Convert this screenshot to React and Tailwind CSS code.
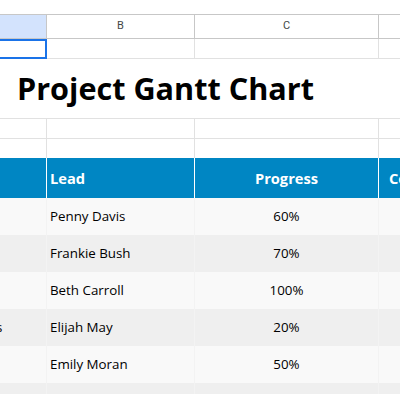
import React from "react";

const font = { fontFamily: '"Open Sans", "Noto Sans", sans-serif' };

const rows = [
  { a: "", lead: "Penny Davis", p: "60%", bg: "bg-[#f9f9f9]" },
  { a: "", lead: "Frankie Bush", p: "70%", bg: "bg-[#efefef]" },
  { a: "", lead: "Beth Carroll", p: "100%", bg: "bg-[#f9f9f9]" },
  { a: "s", lead: "Elijah May", p: "20%", bg: "bg-[#efefef]" },
  { a: "", lead: "Emily Moran", p: "50%", bg: "bg-[#f9f9f9]" },
  { a: "", lead: "", p: "", bg: "bg-[#efefef]" },
];

function GridRow({ h }) {
  return (
    <div className={`flex ${h} border-b border-[#e1e1e1]`}>
      <div className="w-[47px] shrink-0 border-r border-[#e1e1e1]" />
      <div className="w-[148px] shrink-0 border-r border-[#e1e1e1]" />
      <div className="w-[184px] shrink-0 border-r border-[#e1e1e1]" />
      <div className="flex-1" />
    </div>
  );
}

export default function App() {
  return (
    <div className="relative w-[400px] h-[394px] overflow-hidden bg-white" style={font}>
      <div className="h-[14px]" />
      {/* column header */}
      <div
        className="flex h-[25px] border-y border-[#c7c7c7] text-[11px] text-[#444746]"
        style={{ fontFamily: 'Roboto, "Liberation Sans", sans-serif' }}
      >
        <div className="w-[47px] shrink-0 bg-[#d3e3fd] border-r border-[#c7c7c7]" />
        <div className="w-[148px] shrink-0 border-r border-[#c7c7c7] flex items-center justify-center">B</div>
        <div className="w-[184px] shrink-0 border-r border-[#c7c7c7] flex items-center justify-center">C</div>
        <div className="flex-1" />
      </div>
      {/* row 1 */}
      <GridRow h="h-[20px]" />
      {/* title row */}
      <div className="h-[60px] border-b border-[#e1e1e1] flex items-center pl-[17px]">
        <span className="text-[30.6px] font-bold text-black whitespace-nowrap">Project Gantt Chart</span>
      </div>
      <GridRow h="h-[20px]" />
      <div className="flex h-[19px]">
        <div className="w-[47px] shrink-0 border-r border-[#e1e1e1]" />
        <div className="w-[148px] shrink-0 border-r border-[#e1e1e1]" />
        <div className="w-[184px] shrink-0 border-r border-[#e1e1e1]" />
        <div className="flex-1" />
      </div>
      {/* table header */}
      <div className="flex h-[40px] bg-[#0086c3] text-white font-bold text-[14.67px]">
        <div className="w-[47px] shrink-0 border-r border-white" />
        <div className="w-[148px] shrink-0 border-r border-white flex items-center pl-[3px]">Lead</div>
        <div className="w-[184px] shrink-0 border-r border-white flex items-center justify-center">Progress</div>
        <div className="flex-1 flex items-center pl-[10px] whitespace-nowrap overflow-hidden">Complete</div>
      </div>
      {rows.map((r, i) => (
        <div key={i} className={`flex h-[37px] ${r.bg} text-[13.33px] text-black`}>
          <div className="w-[47px] shrink-0 border-r border-[#f3f3f3] flex items-center overflow-hidden">
            {r.a && <span className="ml-[-4px] mt-[1px]">{r.a}</span>}
          </div>
          <div className="w-[148px] shrink-0 border-r border-[#f3f3f3] flex items-center pl-[3px] pt-[1px] whitespace-nowrap">
            {r.lead}
          </div>
          <div className="w-[184px] shrink-0 border-r border-[#f3f3f3] flex items-center justify-center pt-[1px]">{r.p}</div>
          <div className="flex-1" />
        </div>
      ))}
      {/* selection */}
      <div className="absolute left-0 top-[39px] w-[47px] h-[20px] border-2 border-l-0 border-[#1a73e8]" />
    </div>
  );
}
